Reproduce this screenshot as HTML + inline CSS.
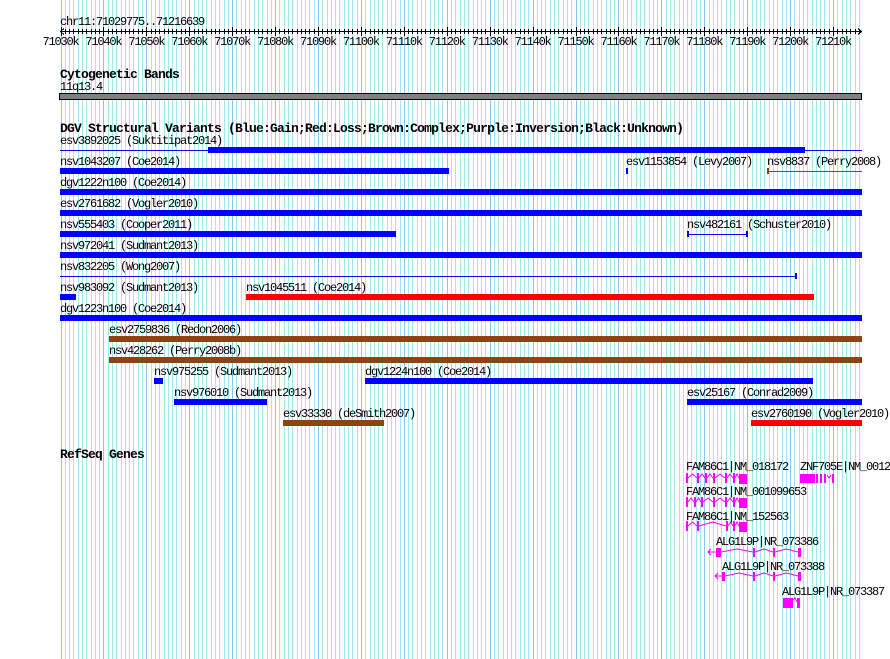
<!DOCTYPE html>
<html><head><meta charset="utf-8"><style>
html,body{margin:0;padding:0;background:#fff;width:890px;height:659px;overflow:hidden}
svg{display:block}
text{font-family:"Liberation Mono","DejaVu Sans Mono",monospace;font-size:12px;letter-spacing:-1.2px;fill:#000}
.b{font-weight:bold;font-size:13px;letter-spacing:-0.8px}
</style></head><body>
<svg id="s" width="890" height="659" xmlns="http://www.w3.org/2000/svg" shape-rendering="crispEdges">
<g id="grid"></g>
<g id="ruler" stroke="#000" stroke-width="1"></g>
<text x="60" y="25">chr11:71029775..71216639</text>
<g id="rl"></g>
<text class="b" x="60" y="78">Cytogenetic Bands</text>
<text x="60" y="90">11q13.4</text>
<rect x="59.5" y="93.5" width="802" height="6" fill="#808080" stroke="#000"/>
<text class="b" x="60" y="132">DGV Structural Variants (Blue:Gain;Red:Loss;Brown:Complex;Purple:Inversion;Black:Unknown)</text>
<g id="feat"></g>
<text class="b" x="60" y="458">RefSeq Genes</text>
<g>
<text x="686" y="470">FAM86C1|NM_018172</text>
<text x="800" y="470">ZNF705E|NM_0012</text>
<text x="686" y="495">FAM86C1|NM_001099653</text>
<text x="686" y="520">FAM86C1|NM_152563</text>
<text x="716" y="545">ALG1L9P|NR_073386</text>
<text x="722" y="570">ALG1L9P|NR_073388</text>
<text x="782" y="595">ALG1L9P|NR_073387</text>
</g>
<g id="genes" fill="#ff00ff" stroke="none"></g>
</svg>
<script>
var NS="http://www.w3.org/2000/svg";
function el(p,t,a){var e=document.createElementNS(NS,t);for(var k in a)e.setAttribute(k,a[k]);p.appendChild(e);return e;}
var g=document.getElementById('grid');
var s=4.292,x0=60.5;
for(var i=0;i<=187;i++){var x=Math.round(x0+i*s)+0.5;if(x>862)break;
 el(g,'line',{x1:x,y1:0,x2:x,y2:659,stroke:(i%10==0)?'#8ec4ee':'#a6e6f0','stroke-width':1});}
var r=document.getElementById('ruler');
el(r,'line',{x1:60,y1:31.5,x2:862,y2:31.5});
el(r,'polyline',{points:'64,28.5 60.5,31.5 64,34.5',fill:'none'});
el(r,'polyline',{points:'858,28.5 861.5,31.5 858,34.5',fill:'none'});
for(var i=0;i<=186;i++){var x=Math.round(x0+i*s)+0.5;if(x>860)break;
 var m=(i%10==0);el(r,'line',{x1:x,y1:m?27:29,x2:x,y2:m?36:34});}
var rl=document.getElementById('rl');
for(var k=0;k<=18;k++){var x=x0+k*10*s;var t=el(rl,'text',{x:x,y:45,'text-anchor':'middle'});t.textContent=(71030+k*10)+'k';}
var f=document.getElementById('feat');
var C={b:'#0000ff',r:'#ff0000',n:'#8b4513'};
function lab(x,y,t){var e=el(f,'text',{x:x,y:y});e.textContent=t;}
function bar(x1,x2,y,c){el(f,'rect',{x:x1,y:y,width:x2-x1,height:6,fill:C[c]});}
function thin(x1,x2,y,c,l,rr){el(f,'rect',{x:x1,y:y+3,width:x2-x1,height:1,fill:C[c]});
 if(l)el(f,'rect',{x:x1,y:y,width:2,height:6,fill:C[c]});if(rr)el(f,'rect',{x:x2-2,y:y,width:2,height:6,fill:C[c]});}
var rows=[
[[60,'esv3892025 (Suktitipat2014)',function(y){thin(60,862,y,'b');bar(208,805,y,'b');}]],
[[60,'nsv1043207 (Coe2014)',function(y){bar(60,449,y,'b');}],[626,'esv1153854 (Levy2007)',function(y){bar(626,628,y,'b');}],[767,'nsv8837 (Perry2008)',function(y){thin(767,862,y,'n',1,0);}]],
[[60,'dgv1222n100 (Coe2014)',function(y){bar(60,862,y,'b');}]],
[[60,'esv2761682 (Vogler2010)',function(y){bar(60,862,y,'b');}]],
[[60,'nsv555403 (Cooper2011)',function(y){bar(60,396,y,'b');}],[687,'nsv482161 (Schuster2010)',function(y){thin(687,748,y,'b',1,1);}]],
[[60,'nsv972041 (Sudmant2013)',function(y){bar(60,862,y,'b');}]],
[[60,'nsv832205 (Wong2007)',function(y){thin(60,797,y,'b',0,1);}]],
[[60,'nsv983092 (Sudmant2013)',function(y){bar(60,76,y,'b');}],[246,'nsv1045511 (Coe2014)',function(y){bar(246,814,y,'r');}]],
[[60,'dgv1223n100 (Coe2014)',function(y){bar(60,862,y,'b');}]],
[[109,'esv2759836 (Redon2006)',function(y){bar(109,862,y,'n');}]],
[[109,'nsv428262 (Perry2008b)',function(y){bar(109,862,y,'n');}]],
[[154,'nsv975255 (Sudmant2013)',function(y){bar(154,163,y,'b');}],[365,'dgv1224n100 (Coe2014)',function(y){bar(365,813,y,'b');}]],
[[174,'nsv976010 (Sudmant2013)',function(y){bar(174,267,y,'b');}],[687,'esv25167 (Conrad2009)',function(y){bar(687,862,y,'b');}]],
[[283,'esv33330 (deSmith2007)',function(y){bar(283,384,y,'n');}],[751,'esv2760190 (Vogler2010)',function(y){bar(751,862,y,'r');}]]
];
for(var i=0;i<rows.length;i++){var cy=140+i*21;
 rows[i].forEach(function(it){lab(it[0],cy+4,it[1]);it[2](cy+7);});}
var G=document.getElementById('genes');
function ex(x,y,w,h){el(G,'rect',{x:x,y:y,width:w,height:h});}
function intr(pts){el(G,'polyline',{points:pts,fill:'none',stroke:'#ff00ff','stroke-width':1,'shape-rendering':'auto'});}
function fam(y,exs){var h=10;var prev=null;
 exs.forEach(function(e){ if(prev!==null){var a=prev,b=e;intr(a+','+(y+5)+' '+((a+b)/2)+','+(y+1)+' '+b+','+(y+5));} ex(e,y,2,h);prev=e+2;});
 ex(739,y+1,8,h);intr(prev+','+(y+5)+' '+((prev+739)/2)+','+(y+1)+' 739,'+(y+5));}
fam(473,[686,697,705,713,725,733]);
fam(497,[686,694,701,713,725,733]);
fam(521,[686,697,726,733]);
ex(800,474,15,9);ex(816,474,2,9);ex(820,474,2,9);ex(824,474,2,9);
intr('827,475 829,478 831,475');ex(832,474,2,9);
function alg(y,ax,exs){intr(ax+','+(y+4)+' '+exs[0][0]+','+(y+4));
 intr((ax+3)+','+(y+1)+' '+ax+','+(y+4)+' '+(ax+3)+','+(y+7));
 for(var i=0;i<exs.length;i++){var e=exs[i];ex(e[0],y,e[1],9);
  if(i+1<exs.length){var a=e[0]+e[1],b=exs[i+1][0];intr(a+','+(y+4)+' '+((a+b)/2)+','+(y+1)+' '+b+','+(y+4));}}}
alg(548,708,[[716,5],[753,2],[773,2],[798,3]]);
alg(572,715,[[722,3],[753,2],[773,2],[798,3]]);
ex(783,598,10,10);ex(797,598,3,10);intr('793,600 795,598 797,602');
</script>
</body></html>
